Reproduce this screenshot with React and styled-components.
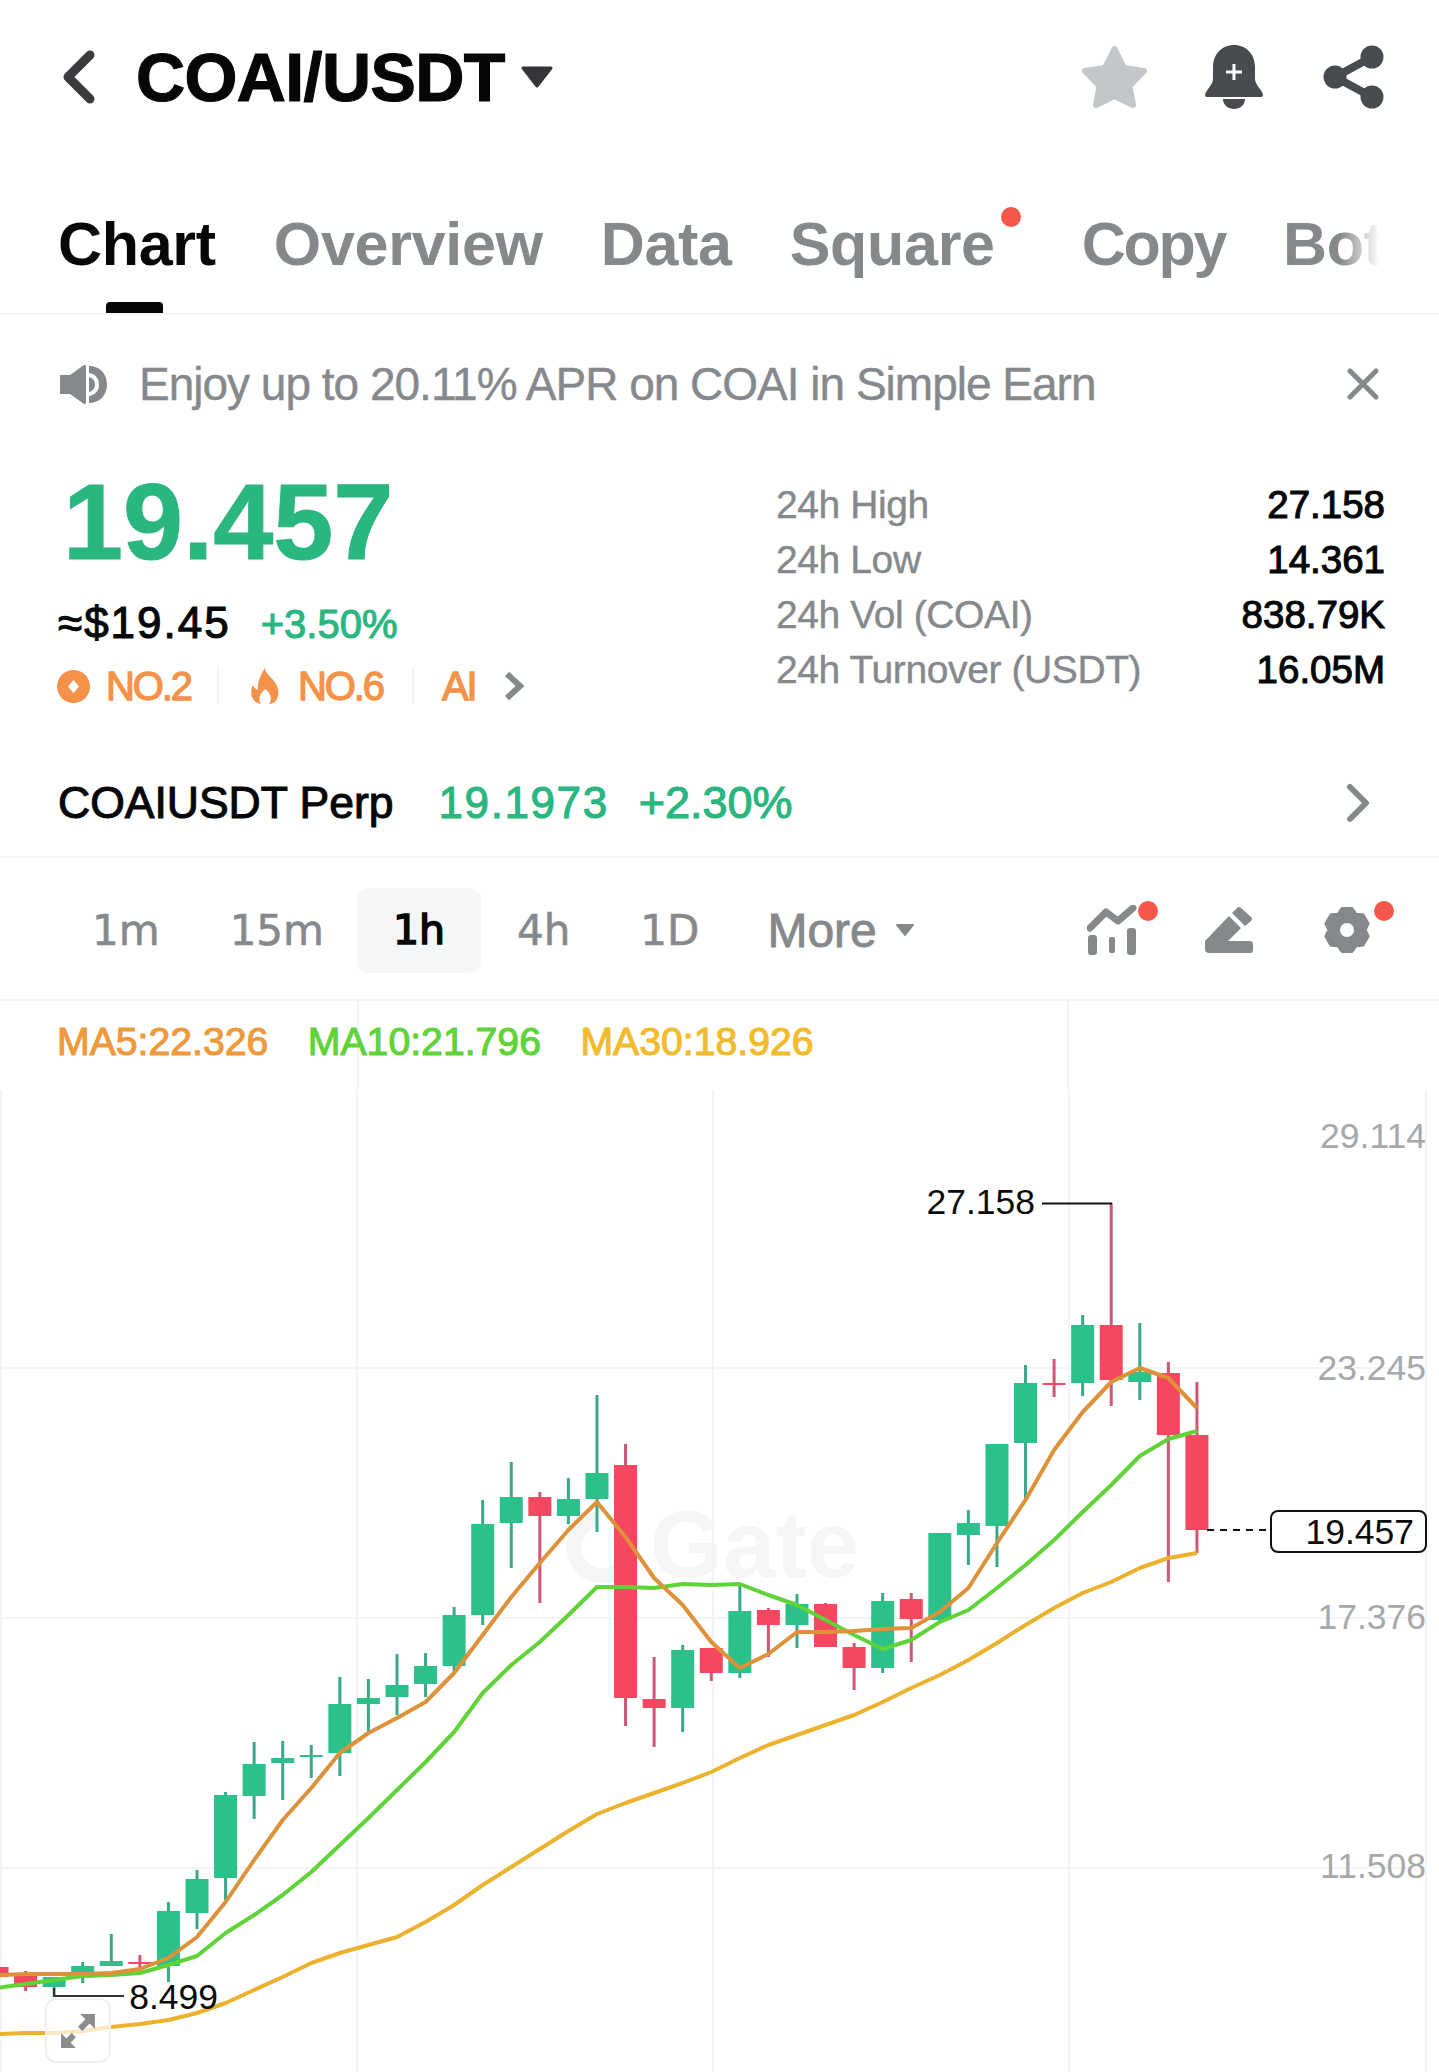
import React from "react";
import styled, { createGlobalStyle, css } from "styled-components";

const GREY = "#86898c";
const GREEN = "#2ab67f";
const ORANGE = "#f5924a";
const LINE = "#f3f4f5";

const GlobalStyle = createGlobalStyle`
  html, body { margin: 0; padding: 0; background: #fff; }
  body { font-family: "Liberation Sans", Arial, sans-serif; }
`;

// fake a medium weight, Liberation only has regular and bold
const medium = css`
  -webkit-text-stroke: 1.1px currentColor;
`;

const Page = styled.div`
  width: 1439px;
  height: 2072px;
  overflow: hidden;
  background: #fff;
  display: flex;
  flex-direction: column;
`;

const Header = styled.header`
  height: 154px;
  padding: 0 55px 0 62px;
  display: flex;
  align-items: center;
  box-sizing: border-box;
`;

const Title = styled.h1`
  margin: 0 16px 0 40px;
  font-size: 68px;
  line-height: 80px;
  font-weight: 700;
  letter-spacing: -0.6px;
  color: #060708;
  -webkit-text-stroke: 1.2px currentColor;
`;

const HeaderIcons = styled.div`
  margin-left: auto;
  display: flex;
  align-items: center;
  gap: 57px;
`;

const ShareIcon = styled.svg`
  margin-left: 3px;
`;

const Tabs = styled.nav`
  height: 159px;
  width: 1385px;
  padding-left: 58px;
  box-sizing: border-box;
  display: flex;
  gap: 58px;
  overflow: hidden;
  white-space: nowrap;
  -webkit-mask-image: linear-gradient(to right, #000 calc(100% - 45px), transparent calc(100% - 5px));
`;

const TabsWrap = styled.div`
  border-bottom: 2px solid ${LINE};
`;

const Tab = styled.div`
  position: relative;
  font-size: 61px;
  line-height: 72px;
  padding-top: 54px;
  font-weight: 700;
  letter-spacing: ${(p) => p.$spacing ?? -0.3}px;
  color: ${(p) => (p.$active ? "#060708" : GREY)};
  margin-right: ${(p) => (p.$dot ? "29px" : "0")};
  flex-shrink: 0;
`;

const TabBar = styled.span`
  position: absolute;
  left: 48px;
  bottom: 0;
  width: 57px;
  height: 11px;
  border-radius: 4px 4px 0 0;
  background: #060708;
`;

const RedDot = styled.span`
  position: absolute;
  width: 20px;
  height: 20px;
  border-radius: 50%;
  background: #f5574a;
  top: ${(p) => p.$top}px;
  right: ${(p) => p.$right}px;
`;

const Notice = styled.div`
  height: 138px;
  padding: 0 60px;
  display: flex;
  align-items: center;
  box-sizing: border-box;
`;

const NoticeText = styled.span`
  margin-left: 32px;
  font-size: 46px;
  letter-spacing: -1px;
  color: ${GREY};
  -webkit-text-stroke: 0.4px currentColor;
`;

const Summary = styled.section`
  height: 297px;
  padding: 15px 54px 0 58px;
  box-sizing: border-box;
  display: flex;
  justify-content: space-between;
`;

const PriceCol = styled.div`
  display: flex;
  flex-direction: column;
`;

const BigPrice = styled.div`
  font-size: 108px;
  line-height: 108px;
  font-weight: 700;
  margin-left: 5px;
  color: ${GREEN};
  -webkit-text-stroke: 1px currentColor;
`;

const SubRow = styled.div`
  margin-top: 22px;
  display: flex;
  align-items: baseline;
  gap: 30px;
`;

const Approx = styled.span`
  font-size: 44px;
  line-height: 50px;
  letter-spacing: 2px;
  color: #060708;
  ${medium}
`;

const Change = styled.span`
  font-size: 40px;
  color: ${GREEN};
  ${medium}
`;

const RankRow = styled.div`
  margin-top: 14px;
  margin-left: -1px;
  display: flex;
  align-items: center;
  color: ${ORANGE};
  font-size: 40px;
  line-height: 48px;
`;

const Rank = styled.span`
  display: flex;
  align-items: center;
  gap: ${(p) => p.$gap}px;
  letter-spacing: -2.1px;
  -webkit-text-stroke: 1.3px currentColor;
`;

const RankDivider = styled.span`
  width: 2px;
  height: 36px;
  margin: 0 ${(p) => p.$right}px 0 ${(p) => p.$left}px;
  background: #f6f3ef;
`;

const RankChevron = styled.svg`
  margin-left: 28px;
`;

const Stats = styled.div`
  width: 609px;
  margin-top: 9px;
  display: grid;
  grid-template-columns: 1fr auto;
  grid-auto-rows: 55px;
  align-items: center;
`;

const StatLabel = styled.span`
  font-size: 39px;
  letter-spacing: -0.4px;
  color: ${GREY};
  -webkit-text-stroke: 0.4px currentColor;
`;

const StatValue = styled.span`
  font-size: 38.5px;
  text-align: right;
  color: #060708;
  ${medium}
`;

const PerpRow = styled.div`
  height: 106px;
  padding: 0 69px 0 58px;
  display: flex;
  align-items: center;
  border-bottom: 2px solid ${LINE};
  box-sizing: content-box;
`;

const PerpName = styled.span`
  font-size: 44.5px;
  color: #060708;
  margin-right: 45px;
  ${medium}
`;

const PerpNum = styled.span`
  font-size: ${(p) => p.$size}px;
  letter-spacing: ${(p) => p.$spacing || 0}px;
  color: ${GREEN};
  margin-right: 30px;
  ${medium}
`;

const PushRight = styled.span`
  margin-left: auto;
  display: flex;
`;

const IntervalRow = styled.div`
  height: 143px;
  box-sizing: border-box;
  padding: 3px 0 0 92px;
  display: flex;
  align-items: center;
  border-bottom: 2px solid ${LINE};
`;

const Interval = styled.div`
  font-family: "DejaVu Sans", sans-serif;
  font-size: 42px;
  color: ${GREY};
  -webkit-text-stroke: 0.6px currentColor;
  margin-right: ${(p) => p.$gap}px;
`;

const ActiveInterval = styled.div`
  width: 124px;
  height: 85px;
  margin-right: 36px;
  border-radius: 12px;
  background: #f4f6f7;
  display: flex;
  align-items: center;
  justify-content: center;
  font-family: "DejaVu Sans", sans-serif;
  font-size: 41px;
  color: #060708;
  -webkit-text-stroke: 1.6px currentColor;
`;

const More = styled.div`
  font-size: 48px;
  color: ${GREY};
  display: flex;
  align-items: center;
  gap: 18px;
  -webkit-text-stroke: 0.9px currentColor;
`;

const ToolIcons = styled.div`
  margin-left: auto;
  display: flex;
  align-items: center;
`;

const ToolIcon = styled.div`
  position: relative;
  display: flex;
  margin-right: ${(p) => p.$gap}px;
`;

const MaRow = styled.div`
  height: 89px;
  box-sizing: border-box;
  padding: 0 0 7px 57px;
  display: flex;
  align-items: center;
  gap: 39.5px;
  font-size: 39.2px;
  background:
    linear-gradient(${LINE}, ${LINE}) 357px 0 / 2px 100% no-repeat,
    linear-gradient(${LINE}, ${LINE}) 1067px 0 / 2px 100% no-repeat;
`;

const MaValue = styled.span`
  color: ${(p) => p.$color};
  ${medium}
`;

const ChartWrap = styled.div`
  position: relative;
  flex: 1;
`;

const ChartSvg = styled.svg`
  display: block;
  width: 1439px;
  height: 982px;
`;

const ExpandButton = styled.div`
  position: absolute;
  left: 45px;
  bottom: 9px;
  width: 66px;
  height: 65px;
  box-sizing: border-box;
  border: 2px solid #f0f0f1;
  border-radius: 11px;
  background: rgba(255, 255, 255, 0.7);
  display: flex;
  align-items: center;
  justify-content: center;
`;

const AxisText = styled.text`
  font-family: "Liberation Sans", Arial, sans-serif;
  font-size: 35.5px;
  fill: ${(p) => p.$fill};
  text-anchor: ${(p) => p.$anchor || "end"};
`;

const Watermark = styled.text`
  font-family: "Liberation Sans", Arial, sans-serif;
  font-size: 94px;
  font-weight: 700;
  fill: #f4f5f6;
`;

// body top, body bottom, wick top, wick bottom, up?
const candles = [
  [1967, 1977, 1962, 1980, 0], [1976, 1987, 1971, 1991, 0], [1977, 1987, 1977, 1996, 1], [1966, 1977, 1962, 1983, 1],
  [1961, 1966, 1934, 1966, 1], [1962, 1964, 1955, 1968, 0], [1911, 1966, 1902, 1982, 1], [1879, 1913, 1870, 1929, 1],
  [1795, 1878, 1792, 1900, 1], [1764, 1796, 1742, 1819, 1], [1758, 1763, 1741, 1800, 1], [1755, 1757, 1745, 1778, 1],
  [1704, 1753, 1677, 1776, 1], [1698, 1704, 1679, 1731, 1], [1685, 1697, 1654, 1715, 1], [1666, 1684, 1653, 1697, 1],
  [1615, 1666, 1607, 1672, 1], [1524, 1615, 1500, 1625, 1], [1497, 1523, 1462, 1568, 1], [1497, 1516, 1492, 1603, 0],
  [1499, 1516, 1478, 1524, 1], [1473, 1499, 1395, 1532, 1], [1465, 1698, 1444, 1726, 0], [1699, 1708, 1657, 1747, 0],
  [1650, 1708, 1645, 1732, 1], [1648, 1673, 1648, 1681, 0], [1611, 1673, 1585, 1678, 1], [1610, 1625, 1608, 1657, 0],
  [1604, 1625, 1594, 1648, 1], [1604, 1647, 1603, 1647, 0], [1647, 1668, 1643, 1690, 0], [1601, 1668, 1593, 1673, 1],
  [1599, 1619, 1593, 1662, 0], [1533, 1620, 1533, 1622, 1], [1523, 1535, 1510, 1565, 1], [1444, 1526, 1444, 1567, 1],
  [1383, 1443, 1365, 1500, 1], [1383, 1385, 1359, 1397, 0], [1325, 1383, 1315, 1396, 1], [1325, 1380, 1203, 1406, 0],
  [1372, 1382, 1323, 1400, 1], [1373, 1435, 1362, 1582, 0], [1435, 1530, 1382, 1553, 0],
];

const candleX = (i) => -3 + 28.57 * i;

const ma5 = [1975, 1974, 1974, 1974, 1973, 1969, 1958, 1937, 1902, 1860, 1820, 1788, 1753, 1733, 1718, 1702, 1673, 1635, 1597, 1563, 1530, 1502, 1537, 1578, 1605, 1642, 1668, 1654, 1632, 1632, 1631, 1629, 1628, 1612, 1588, 1543, 1500, 1450, 1412, 1382, 1368, 1378, 1408];
const ma10 = [1988, 1984, 1980, 1976, 1975, 1973, 1965, 1956, 1933, 1915, 1895, 1872, 1845, 1818, 1790, 1762, 1732, 1693, 1665, 1642, 1615, 1587, 1587, 1588, 1584, 1585, 1584, 1595, 1605, 1620, 1635, 1649, 1640, 1622, 1610, 1588, 1565, 1540, 1512, 1485, 1456, 1439, 1431];
const ma30 = [2034, 2033, 2033, 2031, 2027, 2024, 2020, 2013, 2003, 1990, 1977, 1963, 1953, 1945, 1937, 1922, 1905, 1885, 1867, 1849, 1831, 1814, 1803, 1793, 1783, 1772, 1758, 1745, 1735, 1725, 1715, 1702, 1688, 1675, 1660, 1643, 1625, 1608, 1593, 1582, 1568, 1558, 1553];

const toPoints = (arr) => arr.map((y, i) => `${candleX(i).toFixed(1)},${y}`).join(" ");

// six broad teeth, flat top with a shallow notch between each
const gearPoints = Array.from({ length: 6 }, (_, t) => [-13, 13, 30].map((d, k) => {
  const a = ((t * 60 - 90 + d) * Math.PI) / 180;
  const r = k === 2 ? 17.5 : 21.5;
  return `${(24 + r * Math.cos(a)).toFixed(1)},${(25 + r * Math.sin(a)).toFixed(1)}`;
}).join(" ")).join(" ");

function Chart() {
  return (
    <ChartSvg viewBox="0 1090 1439 982">
      {[1, 357, 713, 1069, 1426].map((x) => (
        <line key={x} x1={x} x2={x} y1="1090" y2="2072" stroke={LINE} strokeWidth="2" />
      ))}
      {[1368, 1618, 1868].map((y) => (
        <line key={y} x1="0" x2="1426" y1={y} y2={y} stroke={LINE} strokeWidth="2" />
      ))}

      <circle cx="603" cy="1547" r="29" fill="none" stroke="#f4f5f6" strokeWidth="15" strokeDasharray="150 40" transform="rotate(-40 603 1547)" />
      <Watermark x="650" y="1577">Gate</Watermark>

      {candles.map(([top, bottom, wickTop, wickBottom, up], i) => (
        <g key={i}>
          <rect x={candleX(i) - 1.5} y={wickTop} width="3" height={wickBottom - wickTop} fill={up ? "#3aa98a" : "#cf5872"} />
          <rect x={candleX(i) - 11.5} y={top} width="23" height={bottom - top} fill={up ? "#2cc08a" : "#f5475f"} />
        </g>
      ))}

      <polyline points={toPoints(ma30)} fill="none" stroke="#ecb22e" strokeWidth="4" strokeLinejoin="round" />
      <polyline points={toPoints(ma10)} fill="none" stroke="#5fd338" strokeWidth="4" strokeLinejoin="round" />
      <polyline points={toPoints(ma5)} fill="none" stroke="#dd9138" strokeWidth="4" strokeLinejoin="round" />

      <AxisText x="1426" y="1148" $fill="#a6a8aa">29.114</AxisText>
      <AxisText x="1426" y="1380" $fill="#a6a8aa">23.245</AxisText>
      <AxisText x="1426" y="1629" $fill="#a6a8aa">17.376</AxisText>
      <AxisText x="1426" y="1878" $fill="#a6a8aa">11.508</AxisText>

      <AxisText x="1035" y="1214" $fill="#0a0a0a">27.158</AxisText>
      <line x1="1042" x2="1112" y1="1203.5" y2="1203.5" stroke="#111" strokeWidth="2" />

      <AxisText x="218" y="2009" $fill="#0a0a0a">8.499</AxisText>
      <polyline points="54,1988 54,1996 124,1996" fill="none" stroke="#333" strokeWidth="2" />

      <line x1="1207" x2="1271" y1="1530" y2="1530" stroke="#111" strokeWidth="2" strokeDasharray="7 6" />
      <rect x="1271" y="1511" width="155" height="41" rx="7" fill="#fff" stroke="#111" strokeWidth="2" />
      <AxisText x="1414" y="1544" $fill="#0a0a0a">19.457</AxisText>
    </ChartSvg>
  );
}

export default function App() {
  return (
    <Page>
      <GlobalStyle />
      <Header>
        <svg width="34" height="56" viewBox="0 0 34 56">
          <polyline points="28,6 6,28 28,50" fill="none" stroke="#3a3c40" strokeWidth="9" strokeLinecap="round" strokeLinejoin="round" />
        </svg>
        <Title>COAI/USDT</Title>
        <svg width="32" height="22" viewBox="0 0 32 22">
          <path d="M2 2 H30 L16 20 Z" fill="#333538" stroke="#333538" strokeWidth="3" strokeLinejoin="round" />
        </svg>
        <HeaderIcons>
          <svg width="67" height="64" viewBox="0 0 67 64">
            <path d="M33.5 4 L43 23 L63 26 L48.5 41 L52 60 L33.5 51 L15 60 L18.5 41 L4 26 L24 23 Z" fill="#c3c7c9" stroke="#c3c7c9" strokeWidth="6" strokeLinejoin="round" />
          </svg>
          <svg width="58" height="64" viewBox="0 0 58 64">
            <path d="M29 0 C17 0 8 9 8 22 V34 C8 40 0 46 0 50 Q0 52 2 52 H56 Q58 52 58 50 C58 46 50 40 50 34 V22 C50 9 41 0 29 0 Z" fill="#484b50" />
            <path d="M18 54 H40 C40 60 35 64 29 64 C23 64 18 60 18 54 Z" fill="#484b50" />
            <path d="M29 19 V35 M21 27 H37" stroke="#fff" strokeWidth="3" />
          </svg>
          <ShareIcon width="61" height="64" viewBox="0 0 61 64">
            <path d="M49 12 L12 32 L49 52" fill="none" stroke="#484b50" strokeWidth="8" />
            <circle cx="49" cy="12" r="11.5" fill="#484b50" />
            <circle cx="12" cy="32" r="11.5" fill="#484b50" />
            <circle cx="49" cy="52" r="11.5" fill="#484b50" />
          </ShareIcon>
        </HeaderIcons>
      </Header>

      <TabsWrap>
        <Tabs>
          <Tab $active>
            Chart
            <TabBar />
          </Tab>
          <Tab>Overview</Tab>
          <Tab>Data</Tab>
          <Tab $dot>
            Square
            <RedDot $top={53} $right={-26} />
          </Tab>
          <Tab $spacing={-2.3}>Copy</Tab>
          <Tab>Bots</Tab>
        </Tabs>
      </TabsWrap>

      <Notice>
        <svg width="47" height="41" viewBox="0 0 47 41">
          <path d="M0 11 H10 L24 1 Q26 0 26 3 V38 Q26 41 24 40 L10 30 H0 Z" fill={GREY} />
          <path fillRule="evenodd" d="M29 2 C40 2 47 10 47 20.5 C47 31 40 39 29 39 V32 C35 31 39 27 39 20.5 C39 14 35 10 29 9 Z M29 13 C33 14 35 17 35 20.5 C35 24 33 27 29 28 Z" fill={GREY} />
        </svg>
        <NoticeText>Enjoy up to 20.11% APR on COAI in Simple Earn</NoticeText>
        <PushRight>
          <svg width="32" height="32" viewBox="0 0 32 32">
            <path d="M3 3 L29 29 M29 3 L3 29" stroke={GREY} strokeWidth="5" strokeLinecap="round" />
          </svg>
        </PushRight>
      </Notice>

      <Summary>
        <PriceCol>
          <BigPrice>19.457</BigPrice>
          <SubRow>
            <Approx>≈$19.45</Approx>
            <Change>+3.50%</Change>
          </SubRow>
          <RankRow>
            <Rank $gap={16}>
              <svg width="33" height="33" viewBox="0 0 33 33">
                <circle cx="16.5" cy="16.5" r="16.5" fill={ORANGE} />
                <path d="M16.5 10 L22 16.5 L16.5 23 L11 16.5 Z" fill="#fff" />
              </svg>
              NO.2
            </Rank>
            <RankDivider $left={26} $right={31} />
            <Rank $gap={18}>
              <svg width="30" height="36" viewBox="0 0 30 36">
                <path d="M15 0 C16 7 22 9 26 16 C31 24 28 36 19 36 C23 31 20 24 15 21 C11 25 7 30 11 36 C2 35 -1 25 3 17 C4 20 6 21 8 22 C7 14 11 6 15 0 Z" fill={ORANGE} />
              </svg>
              NO.6
            </Rank>
            <RankDivider $left={29} $right={28} />
            <Rank>AI</Rank>
            <RankChevron width="20" height="30" viewBox="0 0 20 30">
              <polyline points="3,3 16,15 3,27" fill="none" stroke="#86898c" strokeWidth="6" />
            </RankChevron>
          </RankRow>
        </PriceCol>
        <Stats>
          <StatLabel>24h High</StatLabel>
          <StatValue>27.158</StatValue>
          <StatLabel>24h Low</StatLabel>
          <StatValue>14.361</StatValue>
          <StatLabel>24h Vol (COAI)</StatLabel>
          <StatValue>838.79K</StatValue>
          <StatLabel>24h Turnover (USDT)</StatLabel>
          <StatValue>16.05M</StatValue>
        </Stats>
      </Summary>

      <PerpRow>
        <PerpName>COAIUSDT Perp</PerpName>
        <PerpNum $size={44} $spacing={1.6}>19.1973</PerpNum>
        <PerpNum $size={45}>+2.30%</PerpNum>
        <PushRight>
          <svg width="24" height="40" viewBox="0 0 24 40">
            <polyline points="4,4 20,20 4,36" fill="none" stroke={GREY} strokeWidth="6" strokeLinecap="round" strokeLinejoin="round" />
          </svg>
        </PushRight>
      </PerpRow>

      <IntervalRow>
        <Interval $gap={70}>1m</Interval>
        <Interval $gap={33}>15m</Interval>
        <ActiveInterval>1h</ActiveInterval>
        <Interval $gap={70}>4h</Interval>
        <Interval $gap={68}>1D</Interval>
        <More>
          More
          <svg width="20" height="14" viewBox="0 0 20 14">
            <path d="M2 2 H18 L10 12 Z" fill={GREY} stroke={GREY} strokeWidth="2" strokeLinejoin="round" />
          </svg>
        </More>
        <ToolIcons>
          <ToolIcon $gap={68}>
            <svg width="50" height="50" viewBox="0 0 50 50">
              <polyline points="3,23 19,7 31,16 46,3" fill="none" stroke={GREY} strokeWidth="7" strokeLinecap="round" strokeLinejoin="round" />
              <rect x="1" y="30" width="9" height="20" rx="3" fill={GREY} />
              <rect x="22" y="32" width="6" height="16" rx="2" fill={GREY} />
              <rect x="40" y="23" width="9" height="27" rx="3" fill={GREY} />
            </svg>
            <RedDot $top={-4} $right={-21} />
          </ToolIcon>
          <ToolIcon $gap={70}>
            <svg width="48" height="48" viewBox="0 0 48 48">
              <path d="M0 35 L24 10 L36 22 L23 35 H45 Q48 35 48 39 V44 Q48 47 45 47 H4 Q0 47 0 43 Z" fill={GREY} />
              <path d="M27 7 L32 2 Q34 0 36 2 L46 11 Q48 13 46 15 L40 20 Z" fill={GREY} />
            </svg>
          </ToolIcon>
          <ToolIcon $gap={68}>
            <svg width="48" height="50" viewBox="0 0 48 50">
              <polygon points={gearPoints} fill={GREY} stroke={GREY} strokeWidth="4" strokeLinejoin="round" />
              <circle cx="24" cy="25" r="7" fill="#fff" />
            </svg>
            <RedDot $top={-4} $right={-23} />
          </ToolIcon>
        </ToolIcons>
      </IntervalRow>

      <MaRow>
        <MaValue $color="#ee9a3c">MA5:22.326</MaValue>
        <MaValue $color="#5fd338">MA10:21.796</MaValue>
        <MaValue $color="#f2bb2b">MA30:18.926</MaValue>
      </MaRow>

      <ChartWrap>
        <Chart />
        <ExpandButton>
          <svg width="36" height="36" viewBox="0 0 34 34">
            <path d="M33 1 H19 L24 6 L17 13 L21 17 L28 10 L33 15 Z" fill="#8a8c8e" />
            <path d="M1 33 H15 L10 28 L15 23 L11 19 L6 24 L1 19 Z" fill="#8a8c8e" />
          </svg>
        </ExpandButton>
      </ChartWrap>
    </Page>
  );
}
